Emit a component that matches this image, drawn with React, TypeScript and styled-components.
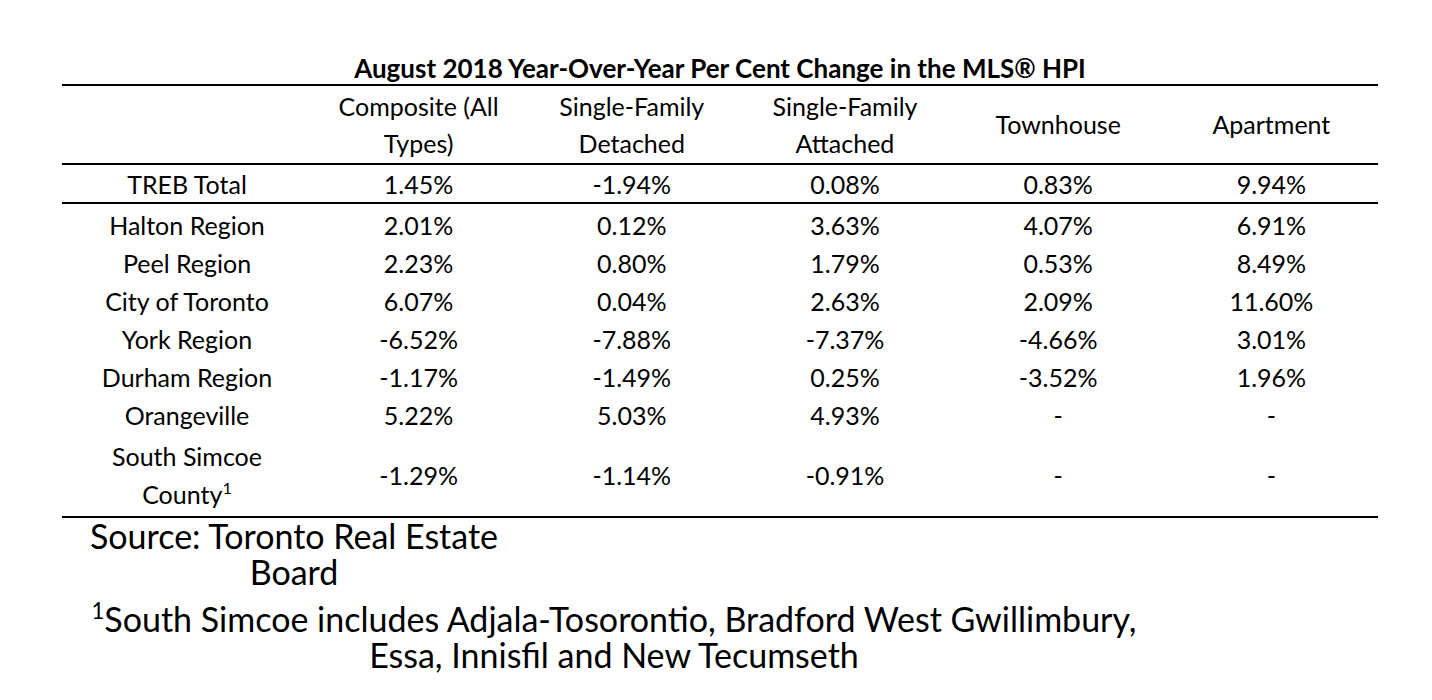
import React from 'react';
import styled, { createGlobalStyle } from 'styled-components';

const GlobalStyle = createGlobalStyle`
  body {
    margin: 0;
    background: #fff;
    color: #000;
    font-family: Lato, "Open Sans", sans-serif;
  }
`;

type Row = [string, string, string, string, string, string];

const rows: Row[] = [
  ['Halton Region', '2.01%', '0.12%', '3.63%', '4.07%', '6.91%'],
  ['Peel Region', '2.23%', '0.80%', '1.79%', '0.53%', '8.49%'],
  ['City of Toronto', '6.07%', '0.04%', '2.63%', '2.09%', '11.60%'],
  ['York Region', '-6.52%', '-7.88%', '-7.37%', '-4.66%', '3.01%'],
  ['Durham Region', '-1.17%', '-1.49%', '0.25%', '-3.52%', '1.96%'],
  ['Orangeville', '5.22%', '5.03%', '4.93%', '-', '-'],
];

const App: React.FC = () => {
  return (
    <Page>
      <GlobalStyle />
      <Title>August 2018 Year-Over-Year Per Cent Change in the MLS® HPI</Title>
      <Table>
        <HeadRow>
          <Cell />
          <Cell>Composite (All<br />Types)</Cell>
          <Cell>Single-Family<br />Detached</Cell>
          <Cell>Single-Family<br />Attached</Cell>
          <Cell>Townhouse</Cell>
          <Cell>Apartment</Cell>
        </HeadRow>
        <TotalRow>
          <Cell>TREB Total</Cell>
          <Cell>1.45%</Cell>
          <Cell>-1.94%</Cell>
          <Cell>0.08%</Cell>
          <Cell>0.83%</Cell>
          <Cell>9.94%</Cell>
        </TotalRow>
        <Body>
          {rows.map((r) => (
            <BodyRow key={r[0]}>
              {r.map((v, i) => (
                <Cell key={i}>{v}</Cell>
              ))}
            </BodyRow>
          ))}
          <BodyRow $tall>
            <Cell>South Simcoe<br />County<Sup>1</Sup></Cell>
            <Cell>-1.29%</Cell>
            <Cell>-1.14%</Cell>
            <Cell>-0.91%</Cell>
            <Cell>-</Cell>
            <Cell>-</Cell>
          </BodyRow>
        </Body>
      </Table>
      <Source>Source: Toronto Real Estate<br />Board</Source>
      <Footnote>
        <Sup>1</Sup>South Simcoe includes Adjala-Tosorontio, Bradford West Gwillimbury,<br />
        Essa, Innisfil and New Tecumseth
      </Footnote>
    </Page>
  );
};

export default App;

const Page = styled.div`
  width: 1432px;
  height: 700px;
  padding-top: 53px;
  box-sizing: border-box;
`;

const Title = styled.div`
  width: 1316px;
  margin-left: 62px;
  text-align: center;
  font-weight: bold;
  font-size: 26px;
  line-height: 31px;
`;

const Table = styled.div`
  width: 1316px;
  margin-left: 62px;
  border-top: 2px solid #000;
  border-bottom: 2px solid #000;
  font-size: 25px;
`;

const GridRow = styled.div`
  display: grid;
  grid-template-columns: 250px repeat(5, 1fr);
  align-items: center;
`;

const HeadRow = styled(GridRow)`
  height: 77px;
  line-height: 37px;
  border-bottom: 2px solid #000;
`;

const TotalRow = styled(GridRow)`
  height: 37px;
  border-bottom: 2px solid #000;
`;

const Body = styled.div`
  padding-top: 2px;
`;

const BodyRow = styled(GridRow)<{ $tall?: boolean }>`
  height: ${(p) => (p.$tall ? '82px' : '38px')};
  line-height: 38px;
`;

const Cell = styled.div`
  text-align: center;
`;

const Sup = styled.sup`
  font-size: 0.65em;
  line-height: 0;
  vertical-align: 0.6em;
`;

const Source = styled.div`
  width: 450px;
  margin-left: 69px;
  text-align: center;
  font-size: 34px;
  line-height: 36px;
`;

const Footnote = styled.div`
  width: 1110px;
  margin-left: 59px;
  margin-top: 11px;
  text-align: center;
  font-size: 34px;
  line-height: 36px;
`;
